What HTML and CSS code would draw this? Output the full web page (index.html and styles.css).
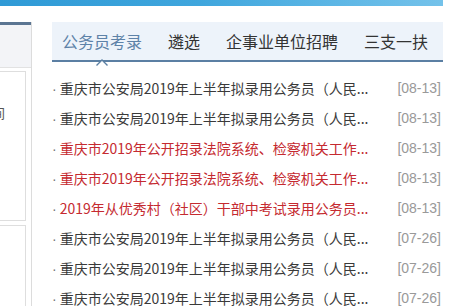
FILE: index.html
```html
<!DOCTYPE html>
<html lang="zh-CN">
<head>
  <meta charset="UTF-8">
  <title>公务员考录</title>
  <link rel="stylesheet" href="styles.css">
</head>
<body>
  <div class="topbar"></div>

  <div class="main">
    <!-- left column, mostly cut off -->
    <div class="side">
      <div class="side-head"></div>
      <div class="side-box"><span class="cut">间</span></div>
      <div class="side-box second"></div>
    </div>

    <!-- news block with tabs -->
    <div class="news">
      <div class="tabs">
        <span class="tab active">公务员考录
          <svg class="caret" width="12" height="7" viewBox="0 0 12 7">
            <polyline points="0.5,6.5 6,1 11.5,6.5" fill="#fff" stroke="#5b7fa3" stroke-width="1.4"/>
          </svg>
        </span>
        <span class="tab">遴选</span>
        <span class="tab">企事业单位招聘</span>
        <span class="tab">三支一扶</span>
      </div>

      <ul class="list">
        <li><span class="title">重庆市公安局2019年上半年拟录用公务员（人民...</span><span class="date">[08-13]</span></li>
        <li><span class="title">重庆市公安局2019年上半年拟录用公务员（人民...</span><span class="date">[08-13]</span></li>
        <li class="hot"><span class="title">重庆市2019年公开招录法院系统、检察机关工作...</span><span class="date">[08-13]</span></li>
        <li class="hot"><span class="title">重庆市2019年公开招录法院系统、检察机关工作...</span><span class="date">[08-13]</span></li>
        <li class="hot"><span class="title">2019年从优秀村（社区）干部中考试录用公务员...</span><span class="date">[08-13]</span></li>
        <li><span class="title">重庆市公安局2019年上半年拟录用公务员（人民...</span><span class="date">[07-26]</span></li>
        <li><span class="title">重庆市公安局2019年上半年拟录用公务员（人民...</span><span class="date">[07-26]</span></li>
        <li><span class="title">重庆市公安局2019年上半年拟录用公务员（人民...</span><span class="date">[07-26]</span></li>
      </ul>
    </div>
  </div>
</body>
</html>
```

FILE: styles.css
```css
html, body {
  margin: 0;
  padding: 0;
  background: #fff;
}

body {
  width: 466px;
  height: 306px;
  overflow: hidden;
  font-family: "Microsoft YaHei", "Noto Sans CJK SC", "Liberation Sans", sans-serif;
  color: #333;
}

.topbar {
  width: 443px;
  height: 6px;
  background: linear-gradient(to right, #2f9ad6 0%, #3fa6dd 45%, #5cb6e5 75%, #74c2ea 100%);
}

.main {
  display: flex;
  margin-top: 16px;
}

.side {
  width: 31px;
  height: 290px;
  border-right: 1px solid #dcdcdc;
  flex-shrink: 0;
}

.side-head {
  height: 42px;
  background: #f3f4f7;
  border-top: 3px solid #5b7592;
  border-bottom: 1px solid #e2e2e2;
}

.side-box {
  width: 25px;
  height: 148px;
  margin-top: 3px;
  border: 1px solid #dedede;
  border-left: none;
  overflow: hidden;
  position: relative;
}

.side-box.second {
  height: 90px;
  margin-top: 4px;
}

.cut {
  display: block;
  margin: 34px 0 0 -8px;
  font-size: 13px;
  line-height: 14px;
  color: #555;
}

.news {
  width: 391px;
  margin-left: 20px;
}

.tabs {
  display: flex;
  align-items: center;
  gap: 26px;
  height: 38px;
  padding-left: 10px;
  background: #edf3fa;
  border-bottom: 2px solid #5b7fa3;
  font-size: 16px;
}

.tab {
  position: relative;
  color: #333;
  line-height: 20px;
}

.tab.active {
  color: #5d82a8;
}

.caret {
  position: absolute;
  left: 34px;
  top: 28px;
}

.list {
  list-style: none;
  margin: 11px 0 0;
  padding: 0;
}

.list li {
  display: flex;
  justify-content: space-between;
  height: 30px;
  line-height: 30px;
  font-size: 14px;
  color: #3a3a3a;
}

.list li .title::before {
  content: "·";
  font-family: "Liberation Sans", Arial, sans-serif;
  color: #777;
  margin-right: 3px;
}

.list li.hot .title {
  color: #c52a30;
}

.date {
  color: #999;
  font-family: "Liberation Sans", Arial, sans-serif;
  font-size: 14px;
  margin-right: 2px;
}
```
